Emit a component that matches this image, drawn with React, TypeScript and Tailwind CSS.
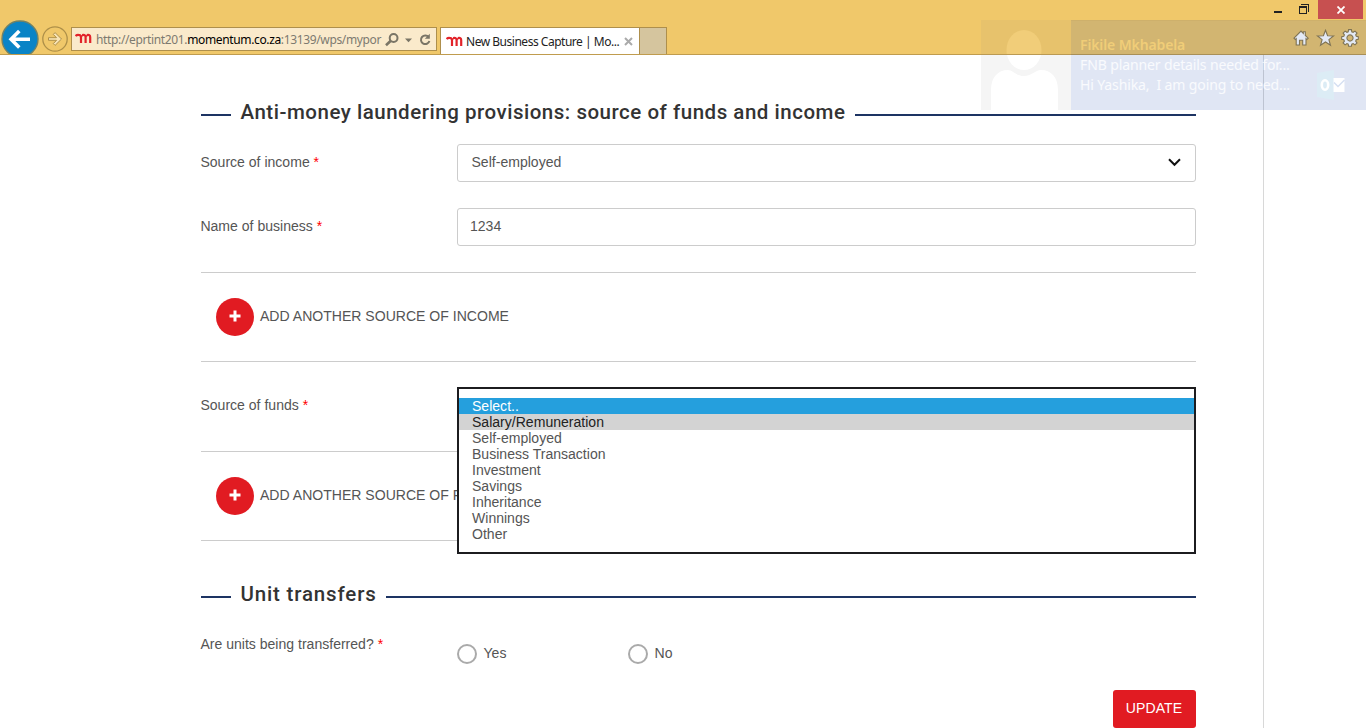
import React from "react";

const options = [
  "Salary/Remuneration",
  "Self-employed",
  "Business Transaction",
  "Investment",
  "Savings",
  "Inheritance",
  "Winnings",
  "Other",
];

function BrandMark() {
  return (
    <svg width="17" height="12" viewBox="0 0 17 12" className="shrink-0" fill="none" stroke="#e2232a">
      <path d="M.5 3C1.500 2 2.500 1.700 3.500 1.800c1.700.1 2.500.9 2.500 2.400v5.800M7.200 2.100c2.600-.6 3.400.4 3.400 2.100v5.800M11.900 2.100c2.600-.6 3.300.4 3.300 2.100v5.800" strokeWidth="2.200" />
      <path d="M5.800 4L8 1.900M10.400 4L12.600 1.900" strokeWidth="1.400" />
    </svg>
  );
}

function BackButton() {
  return (
    <svg width="38" height="38" viewBox="0 0 38 38" className="shrink-0">
      <circle cx="19" cy="19" r="18" fill="#0a84c6" stroke="#6f8268" strokeWidth="1.4" />
      <path d="M29 19.2H10.5M18.3 11l-8.2 8.2 8.2 8.2" fill="none" stroke="#fff" strokeWidth="3.6" />
    </svg>
  );
}

function ForwardButton() {
  return (
    <svg width="26" height="26" viewBox="0 0 26 26" className="shrink-0">
      <circle cx="13" cy="13" r="12.2" fill="none" stroke="#ae9049" strokeWidth="1.3" />
      <path
        d="M6.5 11.7h8l-3.2-3.3 1.8-1.8 6.4 6.4-6.4 6.4-1.8-1.8 3.2-3.3h-8z"
        fill="#f8e4b5"
        stroke="#ae9049"
        strokeWidth="1"
      />
    </svg>
  );
}

function BrowserBar() {
  return (
    <header className="flex h-[55px] overflow-hidden border-b border-[#c09c4e] bg-[#f0c86a]">
      <div className="flex items-start pl-px pt-5">
        <BackButton />
        <div className="pl-[3px] pt-[6px]">
          <ForwardButton />
        </div>
        <div className="ml-[3px] mt-[7px] flex h-6 w-[366px] items-center border border-[#ae8f4c] bg-[#faeacb] pl-[3px] font-['Noto_Sans','Open_Sans',sans-serif] text-[12px] text-[#7d7a70]">
          <BrandMark />
          <span className="ml-[4px] w-[286px] whitespace-nowrap pt-px tracking-[-0.36px]">
            http://eprtint201.<span className="text-black">momentum.co.za</span>:13139/wps/mypor
          </span>
          <svg width="50" height="16" viewBox="0 0 50 16" className="ml-[3px] mt-[2px] shrink-0" fill="none" stroke="#7a7566">
            <circle cx="8.6" cy="6" r="3.9" strokeWidth="2" />
            <path d="M5.8 8.8L1 13.3" strokeWidth="2.6" />
            <path d="M20 6.5h7l-3.5 3.7z" fill="#7a7566" stroke="none" />
            <path d="M43.7 5.2A4.3 4.3 0 1 0 44.4 9" strokeWidth="2" />
            <path d="M44.8 1.8v5h-5z" fill="#7a7566" stroke="none" />
          </svg>
        </div>
        <div className="ml-[3px] mt-[7px] flex h-[28px] w-[200px] items-center border border-b-0 border-[#ae8f4c] bg-white pl-[5px] font-['Noto_Sans','Open_Sans',sans-serif] text-[12px] text-[#222]">
          <BrandMark />
          <span className="ml-[3px] w-[157px] whitespace-nowrap tracking-[-0.48px]">New Business Capture | Mo...</span>
          <svg width="9" height="9" viewBox="0 0 9 9" className="ml-[1px] shrink-0" stroke="#aaa" strokeWidth="2">
            <path d="M1 1l7 7M8 1L1 8" />
          </svg>
        </div>
        <div className="mt-[7px] h-[28px] w-[27px] border border-b-0 border-l-0 border-[#ae8f4c] bg-[#d5c59e]" />
      </div>
      <div className="ml-auto flex h-[19px] items-start">
        <svg width="46" height="19" viewBox="0 0 46 19" shapeRendering="crispEdges">
          <path d="M2 11h8v2H2z" fill="#222" />
          <path d="M27 6h8v8h-8zM28 8v5h6V8z" fill="#222" fillRule="evenodd" />
          <path d="M29 4h8v8h-1V5h-7z" fill="#222" />
        </svg>
        <div className="flex h-[19px] w-[45px] items-center justify-center bg-[#c75050]">
          <svg width="8" height="8" viewBox="0 0 8 8" stroke="#fff" strokeWidth="1.8">
            <path d="M.5.5l7 7M7.500.5l-7 7" />
          </svg>
        </div>
        <div className="w-[3px]" />
      </div>
    </header>
  );
}

function Toast() {
  return (
    <div className="absolute left-[981px] top-5 flex h-[90px] w-[385px] overflow-hidden">
      <div className="flex w-[90px] justify-center bg-[#88888816]">
        <svg width="90" height="90" viewBox="0 0 90 90">
          <defs>
            <clipPath id="above-bar"><path d="M0 0h90v34H0z" /></clipPath>
            <clipPath id="below-bar"><path d="M0 35h90v55H0z" /></clipPath>
          </defs>
          <ellipse cx="43" cy="30" rx="17.500" ry="20" fill="#f1cd79" clipPath="url(#above-bar)" />
          <g fill="#fff" clipPath="url(#below-bar)">
            <ellipse cx="43" cy="30" rx="17.500" ry="20" />
            <path d="M10 90V70c0-13 7-20 17-20 5 0 8 6 16 6s11-6 17-6c10 0 17 7 17 20v20z" />
          </g>
        </svg>
      </div>
      <div className="flex flex-1 border-t border-[#ac8c381a] bg-[#0034a81f] pl-[9px] pt-[14px] font-['Noto_Sans','Open_Sans',sans-serif] text-[14px] leading-5 text-white/80">
        <div className="w-[237px] whitespace-pre tracking-[-0.12px]">
          <div className="font-semibold text-[#f0cd78]">Fikile Mkhabela</div>
          <div>FNB planner details needed for...</div>
          <div>Hi Yashika,  I am going to need...</div>
        </div>
        <svg width="30" height="32" viewBox="0 0 30 32" className="mt-[34px] shrink-0">
          <path d="M0 4l17-3v30L0 28z" fill="#dcecf5" />
          <ellipse cx="8" cy="16" rx="3.200" ry="4.700" fill="none" stroke="#fff" strokeWidth="2.600" />
          <path d="M16.500 9h11v14h-11z" fill="#fff" />
          <path d="M17 13.500l4 4 6.500-6.500" fill="none" stroke="#d6e0f2" strokeWidth="1.500" />
        </svg>
      </div>
    </div>
  );
}

function BrowserTools() {
  return (
    <svg width="66" height="18" viewBox="0 0 66 18" className="absolute left-[1293px] top-[29px]" fill="#e3e9f5" stroke="#7f7353" strokeWidth="1.100">
      <path d="M1 9.200L8 2l2.300 2.300V2.800h2v3.600L15.200 9.200l-1.300 1.300-.9-.8V16H9.700v-4.800H6.500V16H3.200V9.700l-.9.800z" />
      <path d="M32.500 1.300l2.100 5.500 5.900.2-4.600 3.600 1.600 5.700-5-3.300-5 3.300 1.600-5.700L24.500 7l5.900-.2z" />
      <path
        transform="translate(0 -.9)"
        fillRule="evenodd"
        d="M55.600 1.500h2.800l.4 2.200 1.300.5 1.900-1.200 2 2-1.300 1.800.6 1.300 2 .4v2.800l-2.100.4-.5 1.300 1.300 1.800-2 2-1.800-1.300-1.400.6-.4 2h-2.800l-.4-2.100-1.300-.5-1.800 1.300-2-2 1.300-1.800-.6-1.300-2.100-.4V8.500l2.100-.4.6-1.300-1.300-1.800 2-2 1.800 1.200 1.300-.5zM57 6.800a3.100 3.100 0 1 0 .01 0z"
      />
    </svg>
  );
}

function Heading({ children, spacing }: { children: React.ReactNode; spacing: string }) {
  return (
    <div className="flex h-[30px] items-center">
      <div className="h-[2px] w-[30px] bg-[#1d3463]" />
      <h2 className={`relative -top-[3px] ml-[9.5px] mr-[9.5px] whitespace-nowrap font-['Roboto',sans-serif] text-[20.5px] font-medium leading-[30px] text-[#333] ${spacing}`}>
        {children}
      </h2>
      <div className="h-[2px] flex-1 bg-[#1d3463]" />
    </div>
  );
}

function Label({ children }: { children: React.ReactNode }) {
  return (
    <div className="-ml-px w-[257px] shrink-0 whitespace-nowrap pb-[2px] pl-[0.4px]">
      {children} <span className="text-[#f00]">*</span>
    </div>
  );
}

function AddRow({ children }: { children: React.ReactNode }) {
  return (
    <div className="flex h-[90px] items-center border-y border-[#ccc] pl-[15px]">
      <div className="flex size-[38px] items-center justify-center rounded-full bg-[#e11b22]">
        <svg width="12" height="12" viewBox="0 0 12 12" className="mb-[2px] mr-px" fill="#fff">
          <path d="M4.500.5h3v4h4v3h-4v4h-3v-4h-4v-3h4z" />
        </svg>
      </div>
      <span className="whitespace-nowrap pb-[3px] pl-[6px]">{children}</span>
    </div>
  );
}

function Radio({ children }: { children: React.ReactNode }) {
  return (
    <div className="flex w-[171px] items-center">
      <div className="size-5 rounded-full border-2 border-[#aaa]" />
      <span className="pb-[2px] pl-[6.5px]">{children}</span>
    </div>
  );
}

export default function App() {
  return (
    <div className="relative h-[728px] w-[1366px] overflow-hidden bg-white">
      <BrowserBar />
      <main className="h-[673px] w-[1264px] border-r border-[#d8d8d8] pl-[201px] pt-[45px] font-['Liberation_Sans',Arial,sans-serif] text-[14.05px] leading-[18px] text-[#555]">
        <div className="w-[995px]">
          <Heading spacing="tracking-[0.52px]">Anti-money laundering provisions: source of funds and income</Heading>
          <div className="mt-[14px] flex h-[38px] items-center">
            <Label>Source of income</Label>
            <div className="flex h-[38px] flex-1 items-center justify-between rounded-[3px] border border-[#ccc] pl-[13.5px] pr-[14px]">
              <span className="pb-[2px]">Self-employed</span>
              <svg width="13" height="9" viewBox="0 0 13 9" className="mb-[2px]" fill="none" stroke="#111" strokeWidth="2">
                <path d="M1 1.200l5.500 5.600L12 1.200" />
              </svg>
            </div>
          </div>
          <div className="mb-[26px] mt-[26px] flex h-[38px] items-center">
            <Label>Name of business</Label>
            <div className="flex h-[38px] flex-1 items-center rounded-[3px] border border-[#ccc] pb-[2px] pl-[12px]">1234</div>
          </div>
          <AddRow>ADD ANOTHER SOURCE OF INCOME</AddRow>
          <div className="relative mb-[26px] mt-[25px] flex h-[38px] items-center">
            <Label>Source of funds</Label>
            <ul className="absolute right-0 top-0 z-10 h-[167px] w-[739px] border-2 border-[#1c1c1f] bg-white pt-[9px] leading-4">
              <li className="h-4 bg-[#259fdd] pl-[13px] text-white">Select..</li>
              {options.map((option, index) => (
                <li key={option} className={index === 0 ? "h-4 bg-[#d3d3d3] pl-[13px] text-[#222]" : "h-4 pl-[13px]"}>
                  {option}
                </li>
              ))}
            </ul>
          </div>
          <AddRow>ADD ANOTHER SOURCE OF FUNDS</AddRow>
          <div className="mt-[41px]">
            <Heading spacing="tracking-[0.83px]">Unit transfers</Heading>
          </div>
          <div className="mt-[23px] flex">
            <Label>Are units being transferred?</Label>
            <div className="mt-[9px] flex">
              <Radio>Yes</Radio>
              <Radio>No</Radio>
            </div>
          </div>
          <div className="mt-[26px] flex justify-end">
            <button className="h-[38px] w-[83px] rounded-[3px] bg-[#e11b22] pb-[3px] pr-px tracking-[0.1px] text-white">UPDATE</button>
          </div>
        </div>
      </main>
      <Toast />
      <BrowserTools />
    </div>
  );
}
